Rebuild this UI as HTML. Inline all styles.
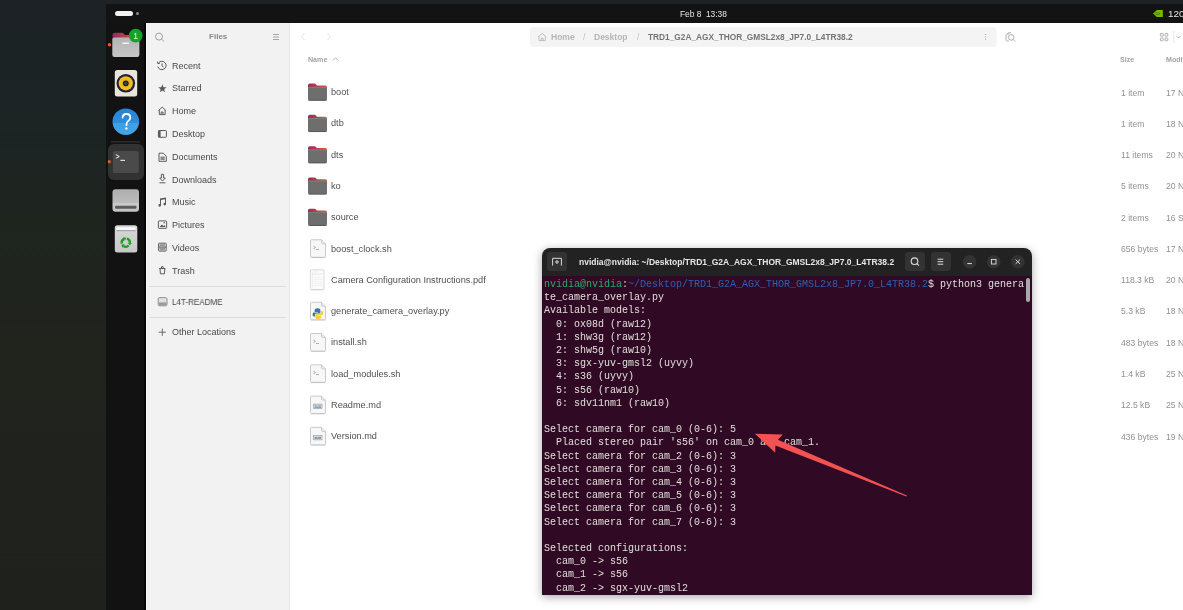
<!DOCTYPE html>
<html><head><meta charset="utf-8">
<style>
*{margin:0;padding:0;box-sizing:border-box}
html,body{width:1183px;height:610px;overflow:hidden;background:#1e2328;font-family:"Liberation Sans",sans-serif}
.a{position:absolute;will-change:transform}
#wall{left:0;top:0;width:106px;height:610px;background:linear-gradient(180deg,#1c2225 0%,#1c2424 20%,#1e251f 36%,#21231d 56%,#20231d 80%,#1f221c 100%)}
#topstrip{left:0;top:0;width:1183px;height:4px;background:#1d2226}
#topbar{left:106px;top:4px;width:1077px;height:19px;background:#131313}
#dock{left:106px;top:23px;width:40px;height:587px;background:#121212}
#sidebar{left:146px;top:23px;width:144px;height:587px;background:#f2f2f2;border-left:1px solid #fafafa;border-right:1px solid #e6e6e6}
#main{left:290px;top:23px;width:893px;height:587px;background:#ffffff}
.st{color:#484848;font-size:9px;white-space:nowrap;line-height:12px}
.fl{color:#505050;font-size:9.2px;white-space:nowrap;line-height:12px}
.sz{color:#919191;font-size:8.6px;white-space:nowrap;line-height:12px}
#term{left:542px;top:248px;width:490px;height:347px;border-radius:8px 8px 0 0;overflow:hidden;box-shadow:0 2px 10px rgba(0,0,0,0.35)}
#thead{left:0;top:0;width:490px;height:28px;background:#222222}
#tbody{left:0;top:28px;width:490px;height:319px;background:#300a24}
pre{font-family:"Liberation Mono",monospace;font-size:10px;line-height:13.21px;color:#e0ded9}
</style></head><body>
<div class="a" id="wall"></div>
<div class="a" id="topstrip"></div>
<div class="a" id="topbar">
  <div class="a" style="left:9px;top:7px;width:17.6px;height:5px;border-radius:3px;background:#f2f2f2"></div>
  <div class="a" style="left:29.5px;top:8px;width:3px;height:3px;border-radius:50%;background:#8a8a8a"></div>
  <div class="a" style="left:573.6px;top:3.6px;color:#e6e6e6;font-size:8.35px;line-height:12px;white-space:nowrap">Feb 8&nbsp; 13:38</div>
  <svg class="a" style="left:1044px;top:4px" width="16" height="16" viewBox="1150 8 16 16"><polygon points="1152.9,13.5 1156.9,9.9 1162.8,9.9 1162.8,17.1 1156.9,17.1" fill="#76b900"/><path d="M1154.6 13.4 Q1157.5 11 1160.2 13.6 Q1158 15.6 1156 14.4" stroke="#3f6a00" stroke-width="0.7" fill="none"/></svg>
  <div class="a" style="left:1062.2px;top:3.6px;color:#e6e6e6;font-size:9.8px;line-height:12px;white-space:nowrap">120%</div>
</div>
<div class="a" id="dock"></div>
<div class="a" style="left:144px;top:23px;width:2px;height:587px;background:linear-gradient(90deg,#0a0a0a,#000)"></div>
<svg class="a" style="left:106px;top:22px" width="40" height="240" viewBox="106 22 40 240">
  <defs>
    <linearGradient id="ftab" x1="0" x2="1" y1="0" y2="0"><stop offset="0" stop-color="#8e2a62"/><stop offset="1" stop-color="#d2503a"/></linearGradient>
    <linearGradient id="fbody" x1="0" x2="0" y1="0" y2="1"><stop offset="0" stop-color="#b4b4b4"/><stop offset="1" stop-color="#c6c6c6"/></linearGradient>
    <linearGradient id="hlp" x1="0" x2="0" y1="0" y2="1"><stop offset="0" stop-color="#2784d6"/><stop offset="0.55" stop-color="#2f8ddb"/><stop offset="0.56" stop-color="#3d9fe4"/><stop offset="1" stop-color="#45a6e8"/></linearGradient>
    <linearGradient id="drv" x1="0" x2="0" y1="0" y2="1"><stop offset="0" stop-color="#aeaeae"/><stop offset="0.62" stop-color="#bcbcbc"/><stop offset="0.63" stop-color="#c9c9c9"/><stop offset="1" stop-color="#c4c4c4"/></linearGradient>
    <linearGradient id="trs" x1="0" x2="0" y1="0" y2="1"><stop offset="0" stop-color="#d8d8d8"/><stop offset="1" stop-color="#c8c8c8"/></linearGradient>
  </defs>
  <!-- files -->
  <path d="M112.5 35 Q112.5 32.8 114.7 32.8 L121.5 32.8 Q123 32.8 124 34 L125 35 L131 35 Q133 35 133 37 L133 40 L112.5 40 Z" fill="url(#ftab)"/>
  <rect x="112.3" y="37.4" width="27.1" height="19.5" rx="2.2" fill="url(#fbody)"/>
  <rect x="122.3" y="42.6" width="6.8" height="1.5" rx="0.7" fill="#f4f4f4"/>
  <circle cx="135.7" cy="35.6" r="6.9" fill="#17a02b"/>
  <text x="135.7" y="38.6" font-family="Liberation Sans" font-size="8.5" fill="#e8f4d8" text-anchor="middle">1</text>
  <circle cx="109.5" cy="44.8" r="1.7" fill="#ef5a1e"/>
  <!-- rhythmbox -->
  <rect x="114.8" y="70" width="22.4" height="26.6" rx="2.5" fill="#e9e5db"/>
  <circle cx="125.8" cy="83.3" r="9.3" fill="#20203a"/>
  <circle cx="125.8" cy="83.3" r="7.1" fill="#efbf22"/>
  <circle cx="125.8" cy="83.3" r="4.2" fill="#d8a818" opacity="0.4"/>
  <circle cx="125.8" cy="83.3" r="2.9" fill="#1e1e28"/>
  <circle cx="125.8" cy="83.3" r="1.6" fill="#474747"/>
  <!-- help -->
  <circle cx="125.8" cy="121.7" r="13.3" fill="url(#hlp)"/>
  <path d="M122.6 117.6 Q122.8 114 126.5 114 Q130.3 114 130.3 117.4 Q130.3 119.6 128.2 120.9 Q126.5 122 126.5 124.3 L126.5 125.2" stroke="#ffffff" stroke-width="1.8" fill="none" stroke-linecap="round"/>
  <circle cx="126.4" cy="128.4" r="1.2" fill="#ffffff"/>
  <!-- separator -->
  <rect x="111.2" y="141.4" width="28.6" height="1" fill="#3a3a3a"/>
  <!-- terminal -->
  <rect x="108" y="144" width="36" height="36" rx="6" fill="#323232"/>
  <rect x="112.8" y="151" width="26" height="22" rx="2.6" fill="#4a4a4a"/>
  <path d="M115.8 154.6 L119.3 156.5 L115.8 158.4" stroke="#ececec" stroke-width="1" fill="none"/>
  <rect x="120.4" y="159.8" width="4.6" height="1.1" fill="#ececec"/>
  <circle cx="109.3" cy="161.7" r="1.6" fill="#ef5a1e"/>
  <!-- drive -->
  <rect x="112.5" y="189.3" width="26.5" height="22.4" rx="3" fill="url(#drv)"/>
  <rect x="115" y="205.8" width="21.5" height="3" rx="1" fill="#5c5c5c"/>
  <!-- trash -->
  <rect x="114.8" y="225.3" width="22.5" height="27.1" rx="2.5" fill="url(#trs)"/>
  <rect x="116.5" y="227.2" width="19" height="3" rx="1" fill="#fafafa"/>
  <rect x="116.5" y="230.2" width="19" height="1" fill="#9a9a9a"/>
  <path d="M126.86 238.64 A4.1 4.1 0 0 1 129.88 242.96 M128.70 245.50 A4.1 4.1 0 0 1 123.45 245.96 M121.84 243.66 A4.1 4.1 0 0 1 124.07 238.88" fill="none" stroke="#1f9c22" stroke-width="2.3"/>
  <g fill="#1f9c22"><polygon points="129.68,245.35 131.98,243.14 127.79,242.77"/><polygon points="121.48,244.58 122.24,247.68 124.65,244.24"/><polygon points="126.24,237.87 123.18,236.98 124.95,240.79"/></g>
</svg>
<div class="a" id="sidebar"></div>
<svg class="a" style="left:146px;top:23px" width="144" height="330" viewBox="146 23 144 330">
  <g fill="none" stroke="#9c9c9c" stroke-width="0.95">
    <circle cx="159" cy="36.6" r="3.5"/>
    <path d="M161.6 39.2 L163.8 41.2" stroke-linecap="round"/>
  </g>
  <g fill="#a4a4a4"><rect x="273" y="34" width="6" height="1"/><rect x="273" y="36.5" width="6" height="1"/><rect x="273" y="39" width="6" height="1"/></g>
  <g fill="none" stroke="#5a5a5a" stroke-width="1">
    <!-- recent -->
    <path d="M158.6 62.8 A4.2 4.2 0 1 1 157.8 66.6"/>
    <path d="M157.5 61.6 L157.8 63.6 L159.8 63.4"/>
    <path d="M162 63.4 L162 65.9 L163.6 67.2"/>
    <!-- home -->
    <path d="M158.5 110.6 L162.2 107.1 L165.9 110.6 M159.3 110 L159.3 114.6 L165.1 114.6 L165.1 110 M161.2 114.6 L161.2 112 L163 112 L163 114.6"/>
    <!-- desktop -->
    <rect x="158.4" y="130.5" width="8" height="6.8" rx="0.8"/>
    <!-- documents -->
    <path d="M159 153.2 L163.3 153.2 L166.3 156.2 L166.3 161.3 L159 161.3 Z"/>
    <!-- downloads -->
    <path d="M161.4 174.3 L163.6 174.3 L163.6 178 L165.3 178 L162.5 181 L159.7 178 L161.4 178 Z"/>
    <path d="M159.5 182.8 L165.5 182.8"/>
    <!-- pictures -->
    <rect x="158.4" y="220.9" width="8.2" height="7.4" rx="0.6"/>
    <!-- videos -->
    <rect x="158.6" y="243.2" width="7.6" height="7.9" rx="0.6"/>
    <path d="M158.6 247.1 L166.2 247.1"/>
    <!-- trash -->
    <path d="M159.2 268.5 L165.4 268.5 M160 268.5 L160.4 273.8 L164.4 273.8 L164.8 268.5 M161.3 268.3 L161.6 266.6 L163 266.6 L163.3 268.3"/>
    <!-- other locations plus -->
    <path d="M162.3 328.6 L162.3 335.8 M158.7 332.2 L165.9 332.2" stroke="#6a6a6a"/>
  </g>
  <g fill="#5a5a5a">
    <rect x="158.4" y="130.5" width="2.2" height="6.8"/>
    <polygon points="162.40,84.30 163.49,87.20 166.58,87.34 164.16,89.27 164.99,92.26 162.40,90.55 159.81,92.26 160.64,89.27 158.22,87.34 161.31,87.20"/>
    <rect x="160.5" y="156.5" width="4.2" height="3.5" opacity="0.7"/>
    <path d="M160 198.6 L166 197.4 L166 204 A1.3 1.3 0 1 1 165 202.9 L165 199.2 L161 200 L161 205.2 A1.3 1.3 0 1 1 160 204.1 Z"/>
    <path d="M159.6 227 L161.8 224.4 L163.4 226 L164.4 225 L165.6 227 Z"/>
    <circle cx="164.2" cy="222.7" r="0.8"/>
    <rect x="159.6" y="244.2" width="5.4" height="2.2" opacity="0.6"/>
    <rect x="159.6" y="247.8" width="5.4" height="2.4" opacity="0.6"/>
  </g>
  <!-- L4T drive -->
  <rect x="158.2" y="297.6" width="8.8" height="8.2" rx="1.4" fill="#e0e0e0" stroke="#7a7a7a" stroke-width="0.8"/>
  <rect x="158.6" y="302.4" width="8" height="3" fill="#9a9a9a"/>
  <!-- separators -->
  <rect x="149.4" y="286" width="136.7" height="1" fill="#dcdcdc"/>
  <rect x="149.4" y="317" width="136.7" height="1" fill="#dcdcdc"/>
</svg>
<div class="a" style="left:208.6px;top:30.5px;color:#888888;font-size:8.05px;font-weight:bold;line-height:12px">Files</div>
<div class="a st" style="left:172.4px;top:59.68px">Recent</div>
<div class="a st" style="left:172.4px;top:82.48px">Starred</div>
<div class="a st" style="left:172.4px;top:105.28px">Home</div>
<div class="a st" style="left:172.4px;top:128.08px">Desktop</div>
<div class="a st" style="left:172.4px;top:150.88px">Documents</div>
<div class="a st" style="left:172.4px;top:173.68px">Downloads</div>
<div class="a st" style="left:172.4px;top:196.48px">Music</div>
<div class="a st" style="left:172.4px;top:219.28px">Pictures</div>
<div class="a st" style="left:172.4px;top:242.08px">Videos</div>
<div class="a st" style="left:172.4px;top:264.88px">Trash</div>
<div class="a st" style="left:172.4px;top:295.58px;transform:scaleX(0.895);transform-origin:0 0">L4T-README</div>
<div class="a st" style="left:172.4px;top:325.98px">Other Locations</div>
<div class="a" id="main"></div>
<svg class="a" style="left:290px;top:23px" width="893" height="430" viewBox="290 23 893 430">
  <defs>
    <linearGradient id="ftab2" x1="0" x2="1" y1="0" y2="0"><stop offset="0" stop-color="#a0285a"/><stop offset="0.5" stop-color="#c23c4a"/><stop offset="1" stop-color="#e0622e"/></linearGradient>
                          </defs>
  <!-- nav arrows -->
  <path d="M304.5 33.2 L301.8 36.6 L304.5 40" stroke="#e2e2e2" stroke-width="0.9" fill="none"/>
  <path d="M327.6 33.2 L330.3 36.6 L327.6 40" stroke="#e2e2e2" stroke-width="0.9" fill="none"/>
  <!-- breadcrumb box -->
  <rect x="530" y="27" width="466.6" height="20" rx="4" fill="#f4f4f4"/>
  <path d="M538.2 37 L542.2 33.3 L546.2 37 M539 36.4 L539 40.6 L545.4 40.6 L545.4 36.4 M541.3 40.6 L541.3 38.3 L543.1 38.3 L543.1 40.6" stroke="#b8b8b8" stroke-width="0.9" fill="none"/>
  <g fill="#a8a8a8"><circle cx="985.6" cy="34.4" r="0.6"/><circle cx="985.6" cy="36.8" r="0.6"/><circle cx="985.6" cy="39.2" r="0.6"/></g>
  <!-- camera/search icon -->
  <g stroke="#a6a6a6" stroke-width="0.9" fill="none">
    <path d="M1009 34 L1007.5 34 Q1006 34 1006 35.5 L1006 39.8 Q1006 41 1007.3 41 L1008.8 41"/>
    <path d="M1007.5 34 L1008.3 32.8 L1011 32.8"/>
    <circle cx="1011.2" cy="37.4" r="2.8"/>
    <path d="M1013.2 39.4 L1015.2 41.4"/>
  </g>
  <!-- view grid icon -->
  <g stroke="#9a9a9a" stroke-width="0.8" fill="none">
    <rect x="1160.4" y="33.4" width="2.8" height="2.8" rx="0.6"/><rect x="1165" y="33.4" width="2.8" height="2.8" rx="0.6"/>
    <rect x="1160.4" y="38" width="2.8" height="2.8" rx="0.6"/><rect x="1165" y="38" width="2.8" height="2.8" rx="0.6"/>
    <path d="M1176.4 35.8 L1178.6 38 L1180.8 35.8"/>
  </g>
  <rect x="1173.4" y="31" width="0.8" height="12" fill="#e2e2e2"/>
  <!-- name sort caret -->
  <path d="M332.8 60.6 L335.6 57.8 L338.4 60.6" stroke="#b0b0b0" stroke-width="0.9" fill="none"/>
  <g transform="translate(308,83.40)">
      <path d="M0 2 Q0 0.2 1.8 0.2 L6.5 0.2 Q7.5 0.2 8.2 1.2 L8.8 2 L17.5 2 Q19 2 19 3.5 L19 6 L0 6 Z" fill="url(#ftab2)"/>
      <rect x="0" y="3.4" width="19" height="14" rx="1.8" fill="#6e6e6e"/>
      <rect x="0" y="3.4" width="19" height="1" fill="#8a8a8a" opacity="0.6"/>
      <rect x="0.3" y="16.4" width="18.4" height="1" fill="#4a4a4a" opacity="0.6"/>
    </g>
  <g transform="translate(308,114.67)">
      <path d="M0 2 Q0 0.2 1.8 0.2 L6.5 0.2 Q7.5 0.2 8.2 1.2 L8.8 2 L17.5 2 Q19 2 19 3.5 L19 6 L0 6 Z" fill="url(#ftab2)"/>
      <rect x="0" y="3.4" width="19" height="14" rx="1.8" fill="#6e6e6e"/>
      <rect x="0" y="3.4" width="19" height="1" fill="#8a8a8a" opacity="0.6"/>
      <rect x="0.3" y="16.4" width="18.4" height="1" fill="#4a4a4a" opacity="0.6"/>
    </g>
  <g transform="translate(308,145.94)">
      <path d="M0 2 Q0 0.2 1.8 0.2 L6.5 0.2 Q7.5 0.2 8.2 1.2 L8.8 2 L17.5 2 Q19 2 19 3.5 L19 6 L0 6 Z" fill="url(#ftab2)"/>
      <rect x="0" y="3.4" width="19" height="14" rx="1.8" fill="#6e6e6e"/>
      <rect x="0" y="3.4" width="19" height="1" fill="#8a8a8a" opacity="0.6"/>
      <rect x="0.3" y="16.4" width="18.4" height="1" fill="#4a4a4a" opacity="0.6"/>
    </g>
  <g transform="translate(308,177.21)">
      <path d="M0 2 Q0 0.2 1.8 0.2 L6.5 0.2 Q7.5 0.2 8.2 1.2 L8.8 2 L17.5 2 Q19 2 19 3.5 L19 6 L0 6 Z" fill="url(#ftab2)"/>
      <rect x="0" y="3.4" width="19" height="14" rx="1.8" fill="#6e6e6e"/>
      <rect x="0" y="3.4" width="19" height="1" fill="#8a8a8a" opacity="0.6"/>
      <rect x="0.3" y="16.4" width="18.4" height="1" fill="#4a4a4a" opacity="0.6"/>
    </g>
  <g transform="translate(308,208.48)">
      <path d="M0 2 Q0 0.2 1.8 0.2 L6.5 0.2 Q7.5 0.2 8.2 1.2 L8.8 2 L17.5 2 Q19 2 19 3.5 L19 6 L0 6 Z" fill="url(#ftab2)"/>
      <rect x="0" y="3.4" width="19" height="14" rx="1.8" fill="#6e6e6e"/>
      <rect x="0" y="3.4" width="19" height="1" fill="#8a8a8a" opacity="0.6"/>
      <rect x="0.3" y="16.4" width="18.4" height="1" fill="#4a4a4a" opacity="0.6"/>
    </g>
  <g transform="translate(310,239.25)">
      <path d="M1.5 0.5 L11.5 0.5 L15.5 4.5 L15.5 17 Q15.5 18 14.5 18 L1.5 18 Q0.5 18 0.5 17 L0.5 1.5 Q0.5 0.5 1.5 0.5 Z" fill="#f7f7f7" stroke="#c4c4c4" stroke-width="0.9"/>
      <path d="M11.5 0.5 L11.5 3.5 Q11.5 4.5 12.5 4.5 L15.5 4.5" fill="#e8e8e8" stroke="#c4c4c4" stroke-width="0.8"/>
      <rect x="1" y="18" width="14.5" height="0.8" fill="#000" opacity="0.12"/>
    <path d="M3.5 7 L5.5 8.3 L3.5 9.6" stroke="#8a8a8a" stroke-width="0.7" fill="none"/><rect x="6" y="10" width="3" height="0.7" fill="#8a8a8a"/></g>
  <g transform="translate(310,269.4)"><rect x="0.4" y="0.4" width="13.6" height="19.8" rx="0.8" fill="#fbfbfb" stroke="#d2d2d2" stroke-width="0.8"/><rect x="0.8" y="20.2" width="13" height="0.8" fill="#000" opacity="0.1"/>
<g fill="#e4e4e4"><rect x="2.5" y="2.3" width="6" height="0.5"/><rect x="2" y="4.2" width="10" height="0.4"/><rect x="2" y="5.2" width="10" height="0.4"/><rect x="2.2" y="3" width="0.5" height="15"/><rect x="3.5" y="8" width="8.5" height="0.4"/><rect x="3.5" y="10" width="8.5" height="0.4"/><rect x="3.5" y="12" width="8.5" height="0.4"/><rect x="3.5" y="14" width="8.5" height="0.4"/><rect x="3.5" y="16" width="8.5" height="0.4"/></g></g>
  <g transform="translate(310,301.79)">
      <path d="M1.5 0.5 L11.5 0.5 L15.5 4.5 L15.5 17 Q15.5 18 14.5 18 L1.5 18 Q0.5 18 0.5 17 L0.5 1.5 Q0.5 0.5 1.5 0.5 Z" fill="#f7f7f7" stroke="#c4c4c4" stroke-width="0.9"/>
      <path d="M11.5 0.5 L11.5 3.5 Q11.5 4.5 12.5 4.5 L15.5 4.5" fill="#e8e8e8" stroke="#c4c4c4" stroke-width="0.8"/>
      <rect x="1" y="18" width="14.5" height="0.8" fill="#000" opacity="0.12"/>
    <path d="M7.8 6.5 Q4.6 6.5 4.6 8.6 L4.6 10.2 L7.9 10.2 L7.9 10.7 L3.6 10.7 Q2.6 10.7 2.6 12.6 Q2.6 14.6 3.8 14.6 L5 14.6 L5 13.2 Q5 11.8 6.6 11.8 L9.2 11.8 Q10.4 11.8 10.4 10.5 L10.4 8.2 Q10.4 6.5 7.8 6.5 Z" fill="#3b77a8"/><path d="M8 17.4 Q11.2 17.4 11.2 15.3 L11.2 13.7 L7.9 13.7 L7.9 13.2 L12.2 13.2 Q13.2 13.2 13.2 11.3 Q13.2 9.3 12 9.3 L10.8 9.3 L10.8 10.7 Q10.8 12.1 9.2 12.1 L6.6 12.1 Q5.4 12.1 5.4 13.4 L5.4 15.7 Q5.4 17.4 8 17.4 Z" fill="#f5cf3f"/></g>
  <g transform="translate(310,333.06)">
      <path d="M1.5 0.5 L11.5 0.5 L15.5 4.5 L15.5 17 Q15.5 18 14.5 18 L1.5 18 Q0.5 18 0.5 17 L0.5 1.5 Q0.5 0.5 1.5 0.5 Z" fill="#f7f7f7" stroke="#c4c4c4" stroke-width="0.9"/>
      <path d="M11.5 0.5 L11.5 3.5 Q11.5 4.5 12.5 4.5 L15.5 4.5" fill="#e8e8e8" stroke="#c4c4c4" stroke-width="0.8"/>
      <rect x="1" y="18" width="14.5" height="0.8" fill="#000" opacity="0.12"/>
    <path d="M3.5 7 L5.5 8.3 L3.5 9.6" stroke="#8a8a8a" stroke-width="0.7" fill="none"/><rect x="6" y="10" width="3" height="0.7" fill="#8a8a8a"/></g>
  <g transform="translate(310,364.33)">
      <path d="M1.5 0.5 L11.5 0.5 L15.5 4.5 L15.5 17 Q15.5 18 14.5 18 L1.5 18 Q0.5 18 0.5 17 L0.5 1.5 Q0.5 0.5 1.5 0.5 Z" fill="#f7f7f7" stroke="#c4c4c4" stroke-width="0.9"/>
      <path d="M11.5 0.5 L11.5 3.5 Q11.5 4.5 12.5 4.5 L15.5 4.5" fill="#e8e8e8" stroke="#c4c4c4" stroke-width="0.8"/>
      <rect x="1" y="18" width="14.5" height="0.8" fill="#000" opacity="0.12"/>
    <path d="M3.5 7 L5.5 8.3 L3.5 9.6" stroke="#8a8a8a" stroke-width="0.7" fill="none"/><rect x="6" y="10" width="3" height="0.7" fill="#8a8a8a"/></g>
  <g transform="translate(310,395.60)">
      <path d="M1.5 0.5 L11.5 0.5 L15.5 4.5 L15.5 17 Q15.5 18 14.5 18 L1.5 18 Q0.5 18 0.5 17 L0.5 1.5 Q0.5 0.5 1.5 0.5 Z" fill="#f7f7f7" stroke="#c4c4c4" stroke-width="0.9"/>
      <path d="M11.5 0.5 L11.5 3.5 Q11.5 4.5 12.5 4.5 L15.5 4.5" fill="#e8e8e8" stroke="#c4c4c4" stroke-width="0.8"/>
      <rect x="1" y="18" width="14.5" height="0.8" fill="#000" opacity="0.12"/>
    <rect x="3.5" y="8.5" width="8.5" height="4.5" fill="#dde3ea" stroke="#8c96a2" stroke-width="0.6"/><rect x="4.5" y="10" width="3" height="0.8" fill="#6a7684"/><rect x="8" y="10" width="3" height="0.8" fill="#6a7684"/><rect x="4.5" y="11.5" width="6.5" height="0.6" fill="#6a7684"/></g>
  <g transform="translate(310,426.87)">
      <path d="M1.5 0.5 L11.5 0.5 L15.5 4.5 L15.5 17 Q15.5 18 14.5 18 L1.5 18 Q0.5 18 0.5 17 L0.5 1.5 Q0.5 0.5 1.5 0.5 Z" fill="#f7f7f7" stroke="#c4c4c4" stroke-width="0.9"/>
      <path d="M11.5 0.5 L11.5 3.5 Q11.5 4.5 12.5 4.5 L15.5 4.5" fill="#e8e8e8" stroke="#c4c4c4" stroke-width="0.8"/>
      <rect x="1" y="18" width="14.5" height="0.8" fill="#000" opacity="0.12"/>
    <rect x="3.5" y="8.5" width="8.5" height="4.5" fill="#dde3ea" stroke="#8c96a2" stroke-width="0.6"/><rect x="4.5" y="10" width="3" height="0.8" fill="#6a7684"/><rect x="8" y="10" width="3" height="0.8" fill="#6a7684"/><rect x="4.5" y="11.5" width="6.5" height="0.6" fill="#6a7684"/></g>
</svg>
<div class="a" style="left:550.7px;top:30.9px;color:#b6b6b6;font-size:8.5px;font-weight:bold;line-height:12px;white-space:nowrap">Home</div>
<div class="a" style="left:582.8px;top:30.9px;color:#c2c2c2;font-size:8.5px;line-height:12px">/</div>
<div class="a" style="left:594.3px;top:30.9px;color:#b6b6b6;font-size:8.5px;font-weight:bold;line-height:12px;white-space:nowrap">Desktop</div>
<div class="a" style="left:636.9px;top:30.9px;color:#c2c2c2;font-size:8.5px;line-height:12px">/</div>
<div class="a" style="left:648.1px;top:30.9px;color:#747474;font-size:8.32px;font-weight:bold;line-height:12px;white-space:nowrap">TRD1_G2A_AGX_THOR_GMSL2x8_JP7.0_L4TR38.2</div>
<div class="a" style="left:308px;top:53.6px;color:#a4a4a4;font-size:7.1px;font-weight:bold;line-height:12px">Name</div>
<div class="a" style="left:1119.9px;top:53.6px;color:#a4a4a4;font-size:7.1px;font-weight:bold;line-height:12px">Size</div>
<div class="a" style="left:1165.8px;top:53.6px;color:#a4a4a4;font-size:7.1px;font-weight:bold;line-height:12px;white-space:nowrap">Modified</div>
<div class="a fl" style="left:331px;top:86.18px">boot</div>
<div class="a sz" style="left:1120.5px;top:86.55px">1 item</div>
<div class="a sz" style="left:1166px;top:86.55px">17 N</div>
<div class="a fl" style="left:331px;top:117.45px">dtb</div>
<div class="a sz" style="left:1120.5px;top:117.82px">1 item</div>
<div class="a sz" style="left:1166px;top:117.82px">18 N</div>
<div class="a fl" style="left:331px;top:148.72px">dts</div>
<div class="a sz" style="left:1120.5px;top:149.09px">11 items</div>
<div class="a sz" style="left:1166px;top:149.09px">20 N</div>
<div class="a fl" style="left:331px;top:179.99px">ko</div>
<div class="a sz" style="left:1120.5px;top:180.36px">5 items</div>
<div class="a sz" style="left:1166px;top:180.36px">20 N</div>
<div class="a fl" style="left:331px;top:211.26px">source</div>
<div class="a sz" style="left:1120.5px;top:211.63px">2 items</div>
<div class="a sz" style="left:1166px;top:211.63px">16 S</div>
<div class="a fl" style="left:331px;top:242.53px">boost_clock.sh</div>
<div class="a sz" style="left:1120.5px;top:242.90px">656 bytes</div>
<div class="a sz" style="left:1166px;top:242.90px">17 N</div>
<div class="a fl" style="left:331px;top:273.80px">Camera Configuration Instructions.pdf</div>
<div class="a sz" style="left:1120.5px;top:274.17px">118.3 kB</div>
<div class="a sz" style="left:1166px;top:274.17px">20 N</div>
<div class="a fl" style="left:331px;top:305.07px">generate_camera_overlay.py</div>
<div class="a sz" style="left:1120.5px;top:305.44px">5.3 kB</div>
<div class="a sz" style="left:1166px;top:305.44px">18 N</div>
<div class="a fl" style="left:331px;top:336.34px">install.sh</div>
<div class="a sz" style="left:1120.5px;top:336.71px">483 bytes</div>
<div class="a sz" style="left:1166px;top:336.71px">18 N</div>
<div class="a fl" style="left:331px;top:367.61px">load_modules.sh</div>
<div class="a sz" style="left:1120.5px;top:367.98px">1.4 kB</div>
<div class="a sz" style="left:1166px;top:367.98px">25 N</div>
<div class="a fl" style="left:331px;top:398.88px">Readme.md</div>
<div class="a sz" style="left:1120.5px;top:399.25px">12.5 kB</div>
<div class="a sz" style="left:1166px;top:399.25px">25 N</div>
<div class="a fl" style="left:331px;top:430.15px">Version.md</div>
<div class="a sz" style="left:1120.5px;top:430.52px">436 bytes</div>
<div class="a sz" style="left:1166px;top:430.52px">19 N</div>
<div class="a" id="term">
  <div class="a" id="thead">
    <div class="a" style="left:4.9px;top:4.3px;width:19.9px;height:18.5px;border-radius:3.5px;background:#333333"></div>
    <div class="a" style="left:363.4px;top:4.2px;width:20.3px;height:18.6px;border-radius:3.5px;background:#333333"></div>
    <div class="a" style="left:389.2px;top:4.2px;width:19.6px;height:18.6px;border-radius:3.5px;background:#333333"></div>
    <svg class="a" style="left:0;top:0" width="490" height="28" viewBox="0 0 490 28">
      <path d="M10.6 17.6 L10.6 10.3 L19.4 10.3 L19.4 17.6" stroke="#d8d8d8" stroke-width="1" fill="none"/>
      <path d="M15 12 L15 16 M13 14 L17 14" stroke="#d8d8d8" stroke-width="1" fill="none"/>
      <g stroke="#dcdcdc" stroke-width="1.1" fill="none"><circle cx="372.5" cy="13.2" r="3.3"/><path d="M374.9 15.6 L377 17.7"/></g>
      <g fill="#dcdcdc"><rect x="395.6" y="10.7" width="5.6" height="1"/><rect x="395.6" y="13.2" width="5.6" height="1"/><rect x="395.6" y="15.7" width="5.6" height="1"/></g>
      <circle cx="427.6" cy="13.7" r="6.8" fill="#333333"/>
      <circle cx="451.7" cy="13.7" r="6.8" fill="#333333"/>
      <circle cx="475.8" cy="13.7" r="6.8" fill="#333333"/>
      <rect x="425.3" y="15.1" width="4.6" height="1" fill="#e0e0e0"/>
      <rect x="449.4" y="11.4" width="4.6" height="4.6" fill="none" stroke="#e0e0e0" stroke-width="0.9"/>
      <path d="M473.6 11.5 L478 15.9 M478 11.5 L473.6 15.9" stroke="#e0e0e0" stroke-width="1"/>
    </svg>
    <div class="a" style="left:36.9px;top:8px;color:#e6e6e6;font-size:8.5px;font-weight:bold;line-height:12px;white-space:nowrap">nvidia@nvidia: ~/Desktop/TRD1_G2A_AGX_THOR_GMSL2x8_JP7.0_L4TR38.2</div>
  </div>
  <div class="a" id="tbody">
    <pre class="a" id="tx" style="left:1.5px;top:1.5px"><span style="color:#2aaa6c">nvidia@nvidia</span><span style="color:#d6d4d0">:</span><span style="color:#2d60b0">~/Desktop/TRD1_G2A_AGX_THOR_GMSL2x8_JP7.0_L4TR38.2</span>$ python3 genera
te_camera_overlay.py
Available models:
  0: ox08d (raw12)
  1: shw3g (raw12)
  2: shw5g (raw10)
  3: sgx-yuv-gmsl2 (uyvy)
  4: s36 (uyvy)
  5: s56 (raw10)
  6: sdv11nm1 (raw10)

Select camera for cam_0 (0-6): 5
  Placed stereo pair 's56' on cam_0 and cam_1.
Select camera for cam_2 (0-6): 3
Select camera for cam_3 (0-6): 3
Select camera for cam_4 (0-6): 3
Select camera for cam_5 (0-6): 3
Select camera for cam_6 (0-6): 3
Select camera for cam_7 (0-6): 3

Selected configurations:
  cam_0 -&gt; s56
  cam_1 -&gt; s56
  cam_2 -&gt; sgx-yuv-gmsl2</pre>
    <div class="a" style="left:484.4px;top:2.3px;width:3.6px;height:23.7px;border-radius:2px;background:#a8a8a8"></div>
  </div>
</div>
<svg class="a" style="left:740px;top:420px" width="180" height="90" viewBox="740 420 180 90"><polygon points="754.9,433.7 782.7,434.5 777.9,439.7 906.8,495.6 906.4,496.6 775.4,445.6 775.2,452.7" fill="#f25252"/></svg>
</body></html>
